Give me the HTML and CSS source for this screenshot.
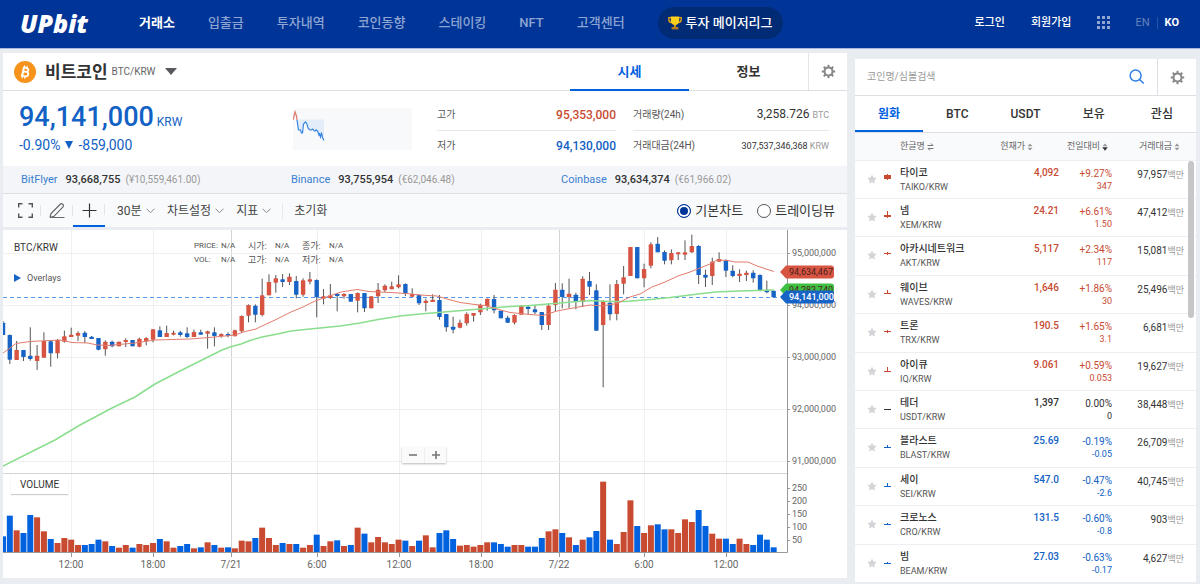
FILE: index.html
```html
<!DOCTYPE html>
<html lang="ko">
<head>
<meta charset="utf-8">
<meta name="viewport" content="width=device-width, initial-scale=1">
<title>UPbit</title>
<link rel="stylesheet" href="styles.css">
</head>
<body>
<header class="topbar">
  <a class="logo" href="#">UPbit</a>
  <nav class="nav">
    <a class="nav-link nav-link-on" href="#">거래소</a>
    <a class="nav-link" href="#">입출금</a>
    <a class="nav-link" href="#">투자내역</a>
    <a class="nav-link" href="#">코인동향</a>
    <a class="nav-link" href="#">스테이킹</a>
    <a class="nav-link" href="#">NFT</a>
    <a class="nav-link" href="#">고객센터</a>
    <a class="league" href="#">
      <svg width="14" height="14" viewBox="0 0 14 14" aria-hidden="true"><path d="M3.2 1.600H.8v2.200c0 1.600 1.200 2.800 2.900 2.900M10.800 1.600h2.400v2.200c0 1.600-1.200 2.800-2.900 2.900" fill="none" stroke="#e9a51c" stroke-width="1.300"/><path d="M2.800.6h8.400v4.200c0 2.600-1.700 4.200-4.200 4.200S2.800 7.400 2.800 4.800z" fill="#fdd01c"/><path d="M6.200 8.800h1.600v2.400H6.200z" fill="#eeb31c"/><path d="M3.600 11h6.800v2.400H3.600z" fill="#b9791c"/></svg>
      투자 메이저리그</a>
  </nav>
  <div class="account">
    <a class="account-link" href="#">로그인</a>
    <a class="account-link" href="#">회원가입</a>
    <button class="icon-btn apps" type="button" aria-label="서비스 더보기">
      <svg width="14" height="14" viewBox="0 0 14 14" fill="#8fa5d2"><path d="M0 0h3v3H0zM5 0h3v3H5zM10 0h3v3h-3zM0 5h3v3H0zM5 5h3v3H5zM10 5h3v3h-3zM0 10h3v3H0zM5 10h3v3H5zM10 10h3v3h-3z"/></svg>
    </button>
    <div class="langs"><a class="lang" href="#">EN</a><a class="lang lang-on" href="#">KO</a></div>
  </div>
</header>

<main class="page">
  <div class="market">
    <section class="summary">
      <div class="coin-head">
        <svg class="coin-logo" width="22" height="22" viewBox="0 0 22 22" aria-hidden="true"><circle cx="11" cy="11" r="11" fill="#f7931a"/><g transform="rotate(12 11 11)" fill="none" stroke="#fff"><path d="M8.400 6.800h3.300c2.900 0 2.900 3.900 0 3.900H8.900h3.300c3.300 0 3.300 4.500 0 4.500H7.600" stroke-width="1.800"/><path d="M9 6.500v9" stroke-width="2"/><path d="M9.400 4.500v2.500M12 4.500v2.500M9.400 15v2.500M12 15v2.500" stroke-width="1.300"/></g></svg>
        <h1 class="coin-name">비트코인</h1>
        <span class="coin-pair">BTC/KRW</span>
        <button class="icon-btn" type="button" aria-label="코인 선택"><svg width="12" height="7" viewBox="0 0 12 7"><path d="M0 0h12L6 7z" fill="#57595e"/></svg></button>
        <div class="coin-tabs">
          <button class="coin-tab coin-tab-on" type="button">시세</button>
          <button class="coin-tab" type="button">정보</button>
          <button class="icon-btn gear-cell" type="button" aria-label="설정"><svg class="gear" width="15" height="15" viewBox="0 0 15 15"></svg></button>
        </div>
      </div>

      <div class="quote">
        <div class="price-block">
          <p class="price"><strong class="price-value">94,141,000</strong><span class="price-unit">KRW</span></p>
          <p class="delta">-0.90% <span class="delta-arrow"></span> -859,000</p>
        </div>
        <svg class="spark" width="119" height="42" viewBox="0 0 119 42" aria-hidden="true"><path d="M0 0h119v42H0z" fill="#f8f9fb"/><path d="M4 11.500h27V32l-2-7-1 5-2-5-4-3-5-1-3-6-3 1-2 10-2-4-2 1z" fill="#e3edfa"/><path d="M0 12L2 4l1.500 4 .5 4" fill="none" stroke="#e07f70" stroke-width="1.300"/><path d="M4 12l1.500 10 2 0 1 3h1l1-9 2-2 1.500 2 1 4 2 2 1.500 0 1-1 2 2 1 0 .5-1 1.500 1 1.500 4 .5-1 1 3 1-4.500 1 5 1.500 3" fill="none" stroke="#3685e2" stroke-width="1.200"/></svg>
        <dl class="stats">
          <div class="stat"><dt>고가</dt><dd class="stat-num up">95,353,000</dd></div>
          <div class="stat"><dt>저가</dt><dd class="stat-num down">94,130,000</dd></div>
        </dl>
        <dl class="stats stats-wide">
          <div class="stat"><dt>거래량(24h)</dt><dd>3,258.726 <small>BTC</small></dd></div>
          <div class="stat"><dt>거래대금(24H)</dt><dd class="stat-small">307,537,346,368 <small>KRW</small></dd></div>
        </dl>
      </div>

      <div class="exchanges">
        <p class="exchange"><a href="#">BitFlyer</a><b>93,668,755</b><small>(¥10,559,461.00)</small></p>
        <p class="exchange"><a href="#">Binance</a><b>93,755,954</b><small>(€62,046.48)</small></p>
        <p class="exchange"><a href="#">Coinbase</a><b>93,634,374</b><small>(€61,966.02)</small></p>
      </div>

      <div class="tools">
        <button class="tool" type="button" aria-label="전체화면"><svg width="15" height="15" viewBox="0 0 15 15"><path d="M.700 4.500V.7h3.800M10.500.7h3.800v3.800M14.300 10.500v3.800h-3.800M4.500 14.300H.7v-3.800" fill="none" stroke="#555" stroke-width="1.400"/></svg></button>
        <button class="tool" type="button" aria-label="그리기"><svg width="16" height="16" viewBox="0 0 16 16" fill="none" stroke="#666" stroke-width="1.200"><path d="M1 14.500l1-4L11 1.500c1-1 2-1 2.800-.2s.8 1.800 0 2.800L5 13.300l-4 1.200h14.500"/></svg></button>
        <button class="tool tool-on" type="button" aria-label="십자선"><svg width="15" height="15" viewBox="0 0 15 15"><path d="M7.500.5v14M.5 7.500h14" stroke="#333" stroke-width="1.200"/></svg></button>
        <div class="menus">
          <label class="menu"><select class="menu-select" aria-label="시간 단위"><option>30분</option></select><svg class="chev" width="9" height="6" viewBox="0 0 9 6"><path d="M.5.7l4 4 4-4"/></svg></label>
          <button class="menu" type="button">차트설정<svg class="chev" width="9" height="6" viewBox="0 0 9 6"><path d="M.5.7l4 4 4-4"/></svg></button>
          <button class="menu" type="button">지표<svg class="chev" width="9" height="6" viewBox="0 0 9 6"><path d="M.5.7l4 4 4-4"/></svg></button>
        </div>
        <button class="menu reset" type="button">초기화</button>
        <div class="views">
          <label class="view"><input class="radio" type="radio" name="view" checked>기본차트</label>
          <label class="view"><input class="radio" type="radio" name="view">트레이딩뷰</label>
        </div>
      </div>
    </section>

    <section class="chart">
      <svg class="plot" id="plot" viewBox="0 0 844 348"></svg>
      <div class="legend">
        <p class="legend-pair">BTC/KRW</p>
        <button class="overlays" type="button"><span class="overlays-arrow"></span>Overlays</button>
      </div>
      <div class="readout">
        <span>PRICE:</span><span>N/A</span><span class="ko">시가:</span><span>N/A</span><span class="ko">종가:</span><span>N/A</span>
        <span>VOL:</span><span>N/A</span><span class="ko">고가:</span><span>N/A</span><span class="ko">저가:</span><span>N/A</span>
      </div>
      <div class="zoomer">
        <button class="zoom-btn" type="button" aria-label="축소"><svg width="10" height="10" viewBox="0 0 10 10"><path d="M1 5h8" stroke="#777" stroke-width="1.600"/></svg></button>
        <button class="zoom-btn" type="button" aria-label="확대"><svg width="10" height="10" viewBox="0 0 10 10"><path d="M1 5h8M5 1v8" stroke="#777" stroke-width="1.600"/></svg></button>
      </div>
      <p class="volume-tag">VOLUME</p>
    </section>
  </div>

  <aside class="coins">
    <div class="search">
      <input class="search-input" type="text" placeholder="코인명/심볼검색" aria-label="코인명/심볼검색">
      <button class="icon-btn search-btn" type="button" aria-label="검색"><svg width="16" height="16" viewBox="0 0 16 16" fill="none" stroke="#2f7fe0" stroke-width="1.500"><circle cx="6.600" cy="6.600" r="5.500"/><path d="M10.500 10.500l4.300 4"/></svg></button>
      <button class="icon-btn search-gear" type="button" aria-label="목록 설정"><svg class="gear" width="15" height="15" viewBox="0 0 15 15"></svg></button>
    </div>
    <div class="coin-filters">
      <button class="filter filter-on" type="button">원화</button>
      <button class="filter" type="button">BTC</button>
      <button class="filter" type="button">USDT</button>
      <button class="filter" type="button">보유</button>
      <button class="filter" type="button">관심</button>
    </div>
    <table class="list">
      <colgroup><col class="c-star"><col class="c-candle"><col><col class="c-price"><col class="c-rate"><col class="c-amount"></colgroup>
      <thead>
        <tr>
          <th></th><th></th>
          <th class="th-name">한글명<svg width="7" height="8" viewBox="0 0 7 8" fill="none" stroke="#777"><path d="M.5 2.500h5.500L4 .5M6.500 5.500H1l2 2"/></svg></th>
          <th class="th-price">현재가<svg class="sort" width="6" height="8" viewBox="0 0 6 8"><path d="M3 .5L5.500 3.200H.5zM3 7.500L.5 4.800h5z"/></svg></th>
          <th class="th-rate">전일대비<svg class="sort sort-on" width="6" height="8" viewBox="0 0 6 8"><path d="M3 .5L5.500 3.200H.5z"/><path class="sort-down" d="M3 7.800L.2 4.200h5.600z"/></svg></th>
          <th class="th-amount">거래대금<svg class="sort" width="6" height="8" viewBox="0 0 6 8"><path d="M3 .5L5.500 3.200H.5zM3 7.500L.5 4.800h5z"/></svg></th>
        </tr>
      </thead>
      <tbody id="rows"></tbody>
    </table>
    <span class="scroll-thumb"></span>
  </aside>
</main>
<script src="app.js"></script>
</body>
</html>
```

FILE: styles.css
```css
* { box-sizing: border-box; }

body {
  margin: 0;
  background: #e9ecf1;
  color: #333;
  font-family: Roboto, "Noto Sans CJK KR", sans-serif;
  font-size: 12px;
  line-height: 16px;
}

a { color: inherit; text-decoration: none; }
p, h1, dl, dd { margin: 0; }
svg { display: block; flex: none; }
.up { color: #c84a31; }
.down { color: #1261c4; }

button, input, select {
  margin: 0;
  padding: 0;
  border: 0;
  background: none;
  color: inherit;
  font: inherit;
}

.icon-btn { display: flex; align-items: center; justify-content: center; }
.gear { fill: none; stroke: #888; }

/* top bar */
.topbar {
  display: flex;
  align-items: center;
  height: 49px;
  padding: 0 21px 3px 20px;
  background: #003597;
  border-bottom: 1px solid #a9b8da;
}
.logo {
  width: 119px;
  color: #fff;
  font-family: "Open Sans", sans-serif;
  font-size: 25px;
  font-style: italic;
  font-weight: 800;
  line-height: 24px;
}
.nav { display: flex; align-items: center; gap: 33px; font-size: 13px; white-space: nowrap; }
.nav-link { color: #8ea4d2; font-weight: 500; }
.nav-link-on { color: #fff; font-weight: 700; }
.league {
  display: flex;
  align-items: center;
  gap: 4px;
  height: 32px;
  padding: 0 10px;
  border-radius: 16px;
  background: #022b75;
  color: #fff;
  font-weight: 500;
}
.account {
  display: flex;
  align-items: center;
  margin-left: auto;
  color: #fff;
  font-size: 11px;
  white-space: nowrap;
}
.account-link { margin-right: 26px; font-weight: 500; }
.apps { margin-right: 24px; }
.langs { display: flex; }
.lang { color: #6683bf; }
.lang-on { margin-left: 7px; padding-left: 7px; border-left: 1px solid #2853a7; color: #fff; font-weight: 700; line-height: 12px; align-self: center; }

/* page frame */
.page { display: flex; align-items: flex-start; gap: 8px; padding: 4px 4px 0 3px; }
.market { flex: 1; min-width: 0; }
.summary { background: #fff; }

/* coin heading */
.coin-head { display: flex; align-items: center; height: 38px; padding-left: 11px; border-bottom: 1px solid #dddfe4; }
.coin-logo { margin-right: 9px; }
.coin-name { font-size: 17px; line-height: 24px; }
.coin-pair { margin: 0 10px 0 4px; color: #666; font-size: 10px; }
.coin-tabs { display: flex; align-self: stretch; margin-left: auto; }
.coin-tab { width: 119px; height: 38px; font-size: 13px; font-weight: 700; }
.coin-tab-on { padding-top: 2px; border-bottom: 2px solid #0062df; color: #0062df; }
.gear-cell { width: 39px; border-left: 1px solid #e3e5ea; }

/* price and statistics */
.quote { display: flex; align-items: flex-start; height: 75px; padding: 8px 18px 0 16px; }
.price-block { flex: 1; padding-top: 4px; color: #1261c4; }
.price { display: flex; align-items: baseline; line-height: 28px; }
.price-value { font-size: 27px; font-weight: 500; }
.price-unit { margin-left: 3px; font-size: 12px; }
.delta { display: flex; align-items: center; gap: 5px; font-size: 14px; line-height: 18px; }
.delta-arrow { border: 4px solid transparent; border-top: 8px solid #1261c4; border-bottom: 0; }
.spark { margin: 9px 25px 0 0; }
.stats { width: 179px; font-size: 12px; }
.stats-wide { width: 196px; margin-left: 17px; }
.stat { display: flex; align-items: center; justify-content: space-between; height: 31px; white-space: nowrap; }
.stat + .stat { border-top: 1px solid #e7e8ec; }
.stat dt { font-size: 10px; color: #555; }
.stat-num { font-weight: 500; }
.stat-small { font-size: 9px; }
.stat small { color: #999; font-size: 9px; }

/* other exchanges */
.exchanges {
  display: grid;
  grid-template-columns: repeat(3, 1fr);
  height: 28px;
  padding: 0 16px 0 18px;
  background: #f4f5f8;
  border-bottom: 1px solid #dddfe4;
}
.exchange { display: flex; align-items: center; font-size: 11px; white-space: nowrap; }
.exchange a { color: #3a80d2; }
.exchange b { margin: 0 5px 0 8px; font-weight: 500; }
.exchange small { color: #999; font-size: 10px; }

/* chart toolbar */
.tools { display: flex; align-items: center; height: 33px; padding: 0 12px 0 6px; background: #f9fafc; color: #444; }
.tool {
  display: flex;
  align-items: center;
  justify-content: center;
  width: 32px;
  height: 33px;
  background: linear-gradient(#e3e5ea, #e3e5ea) right center / 1px 11px no-repeat;
}
.tool-on { border-bottom: 2px solid #0062df; padding-top: 2px; }
.menus { display: flex; gap: 12px; margin-left: 12px; }
.menu { display: flex; align-items: center; gap: 4px; }
.menu-select { appearance: none; }
.chev { fill: none; stroke: #888; }
.reset { margin-left: 11px; padding-left: 11px; border-left: 1px solid #e7e9ee; }
.views { display: flex; gap: 14px; margin-left: auto; font-size: 13px; color: #333; }
.view { display: flex; align-items: center; gap: 4px; white-space: nowrap; }
.radio {
  appearance: none;
  width: 14px;
  height: 14px;
  border: 1px solid #555;
  border-radius: 50%;
  background: #fff;
}
.radio:checked { border-color: #003597; background: #003597; box-shadow: inset 0 0 0 2px #fff; }

/* chart */
.chart { position: relative; margin-top: 3px; background: #fff; }
.plot { width: 100%; height: auto; }
.grid { stroke: #f0f0f1; }
.grid-day { stroke: #d4d4d6; }
.frame { stroke: #999; fill: none; }
.wick { stroke: #555; }
.rise { fill: #d75442; }
.fall { fill: #1763c6; }
.vol-rise { fill: #c84a31; }
.vol-fall { fill: #0062df; }
.now { fill: none; stroke: #5a9aee; stroke-dasharray: 4 3; }
.avg-fast { fill: none; stroke: #e27c6e; }
.avg-slow { fill: none; stroke: #8ade8d; stroke-width: 1.5; }
.axis { fill: #666; font-size: 9px; }
.axis-time { fill: #666; font-size: 10px; text-anchor: middle; }
.flag-red { fill: #d75442; }
.flag-green { fill: #3fc043; }
.flag-blue { fill: #1763c6; }
.flag-dark { fill: #4d211c; font-size: 9px; }
.flag-light { fill: #fff; font-size: 9px; font-weight: 500; }
.legend { position: absolute; left: 11px; top: 10px; }
.legend-pair { font-size: 10px; }
.overlays { display: flex; align-items: center; gap: 6px; margin-top: 14px; color: #555; font-size: 9px; }
.overlays-arrow { border: 4px solid transparent; border-left: 7px solid #1763c6; border-right: 0; }
.readout {
  position: absolute;
  left: 191px;
  top: 9px;
  display: grid;
  grid-template-columns: repeat(6, 27px);
  color: #555;
  font-size: 8px;
  line-height: 14px;
}
.ko { font-size: 9px; }
.zoomer {
  position: absolute;
  left: 399px;
  top: 217px;
  display: flex;
  background: #fafafa;
  box-shadow: 0 1px 2px #bbb;
}
.zoom-btn { display: flex; align-items: center; justify-content: center; width: 22px; height: 16px; }
.zoom-btn + .zoom-btn { border-left: 1px solid #eee; }
.volume-tag {
  position: absolute;
  left: 8px;
  top: 246px;
  padding: 1px 9px;
  background: #fff;
  box-shadow: 0 1px 1px #ccc;
  font-size: 10px;
}

/* coin list */
.coins { position: relative; width: 341px; margin-top: 6px; background: #fff; }
.search { display: flex; height: 37px; border-bottom: 1px solid #dddfe4; }
.search-input { flex: 1; min-width: 0; padding-left: 12px; font-size: 10px; outline: 0; }
.search-input::placeholder { color: #999; opacity: 1; }
.search-btn { width: 41px; }
.search-gear { width: 39px; border-left: 1px solid #dddfe4; }
.coin-filters { display: flex; border-bottom: 1px solid #dddfe4; }
.filter { flex: 1; height: 36px; font-weight: 500; }
.filter-on { padding-top: 2px; border-bottom: 2px solid #0062df; color: #0062df; font-weight: 700; }
.list { width: 100%; height: 449px; table-layout: fixed; border-collapse: collapse; }
.c-star { width: 28px; }
.c-candle { width: 17px; }
.c-price { width: 60px; }
.c-rate { width: 53px; }
.c-amount { width: 84px; }
th { height: 27px; padding: 0; background: #f9fafc; color: #666; font-size: 9px; font-weight: 400; text-align: right; white-space: nowrap; }
th svg { display: inline-block; margin-left: 2px; vertical-align: middle; }
.sort { fill: #999; }
.sort-down { fill: #333; }
.th-name { text-align: left; }
.th-price { padding-right: 26px; }
.th-rate { padding-right: 4px; }
.th-amount { padding-right: 16px; }
td { padding: 0; border-top: 1px solid #eeeff2; vertical-align: top; text-align: right; white-space: nowrap; font-size: 10px; line-height: 14px; }
.td-star { padding: 13px 0 0 12px; }
.td-candle { padding: 11px 0 0 1px; }
.td-name, .td-price, .td-rate { padding-top: 5px; }
.td-name { text-align: left; }
.td-name b { display: block; font-weight: 500; }
.td-name small { display: block; color: #555; font-size: 9px; }
.td-price { font-weight: 500; }
.td-rate { padding-top: 6px; }
.td-rate small { display: block; font-size: 9px; line-height: 10px; }
.td-amount { padding: 7px 12px 0 0; }
.td-amount small { color: #999; font-size: 9px; }
.scroll-thumb { position: absolute; right: 2px; top: 102px; width: 6px; height: 157px; border-radius: 3px; background: #c6c6c8; }
```

FILE: app.js
```js
// Gear icon shared by both settings buttons
const teeth = Array.from({ length: 8 }, (_, i) =>
  `<path d="M7.500 .8v2.400" stroke-width="2" transform="rotate(${i * 45} 7.500 7.500)"/>`).join('');
document.querySelectorAll('.gear').forEach(g => {
  g.innerHTML = `<circle cx="7.500" cy="7.500" r="4" stroke-width="2"/>${teeth}`;
});

// Coin list: name, pair, price, rate, change, amount, candle [high, open, close, low]
const coins = [
  ['타이코', 'TAIKO', '4,092', '+9.27%', '347', '97,957', [2, 3, 7, 8]],
  ['넴', 'XEM', '24.21', '+6.61%', '1.50', '47,412', [1, 5, 7, 8]],
  ['아카시네트워크', 'AKT', '5,117', '+2.34%', '117', '15,081', [4, 5, 6, 7]],
  ['웨이브', 'WAVES', '1,646', '+1.86%', '30', '25,496', [3, 6, 7, 7]],
  ['트론', 'TRX', '190.5', '+1.65%', '3.1', '6,681', [5, 6, 7, 8]],
  ['아이큐', 'IQ', '9.061', '+0.59%', '0.053', '19,627', [3, 7, 8, 8]],
  ['테더', 'USDT', '1,397', '0.00%', '0', '38,448', [7, 7, 8, 8]],
  ['블라스트', 'BLAST', '25.69', '-0.19%', '-0.05', '26,709', [5, 7, 8, 8]],
  ['세이', 'SEI', '547.0', '-0.47%', '-2.6', '40,745', [4, 7, 8, 8]],
  ['크로노스', 'CRO', '131.5', '-0.60%', '-0.8', '903', [6, 7, 8, 8]],
  ['빔', 'BEAM', '27.03', '-0.63%', '-0.17', '4,627', [6, 7, 8, 8]]
];
const star = '<svg width="10" height="10" viewBox="0 0 10 10"><path d="M5 .5l1.400 3 3.300.4-2.400 2.300.6 3.300L5 7.900 2.100 9.500l.6-3.300L.3 3.900l3.300-.4z" fill="#d3d4d7"/></svg>';
document.getElementById('rows').innerHTML = coins.map(([name, code, price, rate, diff, amount, [h, o, c, l]]) => {
  const tone = rate[0] === '+' ? 'up' : rate[0] === '-' ? 'down' : '';
  return `<tr>
    <td class="td-star"><button class="icon-btn" type="button" aria-label="${name} 관심">${star}</button></td>
    <td class="td-candle ${tone}"><svg width="8" height="14" viewBox="0 0 8 14" fill="currentColor"><path d="M0 ${o}h7v${c - o}H0zM3 ${h}h1v${l - h}H3z"/></svg></td>
    <td class="td-name"><b>${name}</b><small>${code}/KRW</small></td>
    <td class="td-price ${tone}">${price}</td>
    <td class="td-rate ${tone}">${rate}<small>${diff}</small></td>
    <td class="td-amount">${amount}<small>백만</small></td>
  </tr>`;
}).join('');

// Candles: direction, body top, body bottom, wick top, wick bottom (thirds of a unit)
const candles = `b293,330,288,330 b330,404,328,417 r375,405,348,405 b375,396,375,408 b392,402,307,407 r392,408,360,435
r348,398,322,398 b349,385,346,425 r345,385,342,400 r334,350,317,353 r329,336,308,336 r324,332,319,348 b323,336,318,354
b335,342,333,342 b339,374,339,376 r350,373,346,392 b350,364,347,367 r350,364,350,364 r345,351,340,366 b345,364,345,364
r341,365,338,367 r339,348,337,361 r313,344,312,352 b316,336,304,336 r324,336,302,336 r323,329,317,331 b322,330,317,335
b325,336,307,339 r321,336,314,336 b322,329,314,329 r319,326,317,371 b322,333,307,364 r327,333,325,338 b327,333,322,337
r316,334,314,334 r273,319,271,323 r240,272,238,292 b242,269,238,292 r211,270,161,274 r171,211,148,211 r160,173,150,203
b163,171,147,186 r155,171,145,180 b168,209,153,220 r166,209,160,215 r163,170,141,178 b165,217,163,277 r214,221,192,238
r211,219,177,222 b206,213,204,259 r207,214,204,221 b207,230,207,230 r204,227,202,262 b204,250,204,261 r214,250,214,250
r194,214,174,234 r182,196,178,201 r184,193,170,193 r178,187,151,190 b177,206,175,213 r207,215,190,216 b210,235,208,240
r227,234,221,259 r224,231,208,231 b225,276,210,284 b267,307,267,320 b305,314,275,325 r293,308,284,310 r267,295,262,302
r264,272,264,290 r240,262,236,270 r221,243,221,257 b222,256,210,265 b257,280,257,280 b278,293,272,294 r270,293,268,298
r242,269,242,269 b245,252,240,267 b253,262,240,267 b261,300,261,315 r242,300,235,315 r194,240,174,258 b194,216,175,250
r206,216,161,250 b209,231,203,253 r161,231,154,246 b168,185,141,210 b196,317,178,317 r229,300,226,487 b233,268,178,286
r177,267,165,286 r157,176,123,208 r66,153,66,153 b66,160,66,160 r132,160,116,187 r58,122,52,130 b56,82,36,82 b81,107,76,118
r84,106,73,118 r82,88,82,105 r82,89,46,105 r63,82,29,84 b63,150,60,177 b149,158,134,186 r110,153,98,180 r102,110,82,110
b107,137,103,156 b137,153,121,157 r146,153,133,171 r143,150,137,168 b143,160,136,173 b150,195,148,199 b195,202,167,205
b197,217,197,217`.split(/\s+/).map(c => [c[0], ...c.slice(1).split(',').map(v => (v - 15) / 3)]);

// Bar heights of the volume pane, in thirds of a unit
const volumes = [47, 109, 65, 57, 111, 104, 62, 39, 27, 42, 37, 21, 21, 24, 37, 32, 18, 13, 21, 13, 24, 21, 27, 39, 32, 13, 18, 24,
  11, 14, 29, 21, 13, 14, 11, 34, 32, 42, 73, 42, 21, 27, 24, 24, 13, 21, 52, 18, 32, 35, 18, 21, 73, 55, 29, 45, 29, 24, 37, 34,
  18, 34, 50, 14, 57, 65, 39, 19, 21, 16, 21, 29, 29, 24, 16, 21, 21, 16, 16, 42, 62, 68, 57, 44, 21, 37, 44, 63, 211, 37, 24, 60,
  155, 78, 57, 80, 83, 68, 68, 57, 98, 90, 126, 78, 55, 40, 40, 24, 40, 24, 21, 52, 37, 14];

const fast = '3,353 10,348 16,343.5 30,341.5 50,340.5 60,340 72,342.5 88,343 97,345 108,345.5 135,343 155,340 190,339 215,337 235,335 245,331.5 256,329 262,326 275,320 291,312 303,307 315,301 325,297.5 341,292 357,289.5 369,291.5 390,292.5 407,293.5 420,295 437,296 447,299 460,302.5 475,304.5 485,305.5 497,309 510,312.5 530,314.5 543,315.5 557,311 573,308 590,305 602,306 617,303.5 630,297 640,294 652,287 665,282 678,276 690,272 700,268 710,264 717,260 728,260.5 735,262 748,262 757,266 766,269 774,271.5';
const slow = '3,466 33,451 55,440 80,425 112,408 135,397 155,384 180,371 200,361 222,350 230,347 241,344 250,340.5 262,337 275,334.5 291,331 310,329 340,326 360,323 378,319.5 400,316 420,314 450,311.5 480,309 510,306.5 530,305.5 560,303 590,300.5 610,301.5 625,301.5 650,299.5 670,297.5 690,295 715,292 740,291 774,290';

const times = [[68, '12:00'], [150, '18:00'], [228, '7/21', 1], [314, '6:00'], [396, '12:00'], [478, '18:00'], [556, '7/22', 1], [641, '6:00'], [723, '12:00']];
const prices = [[23, '95,000,000'], [75, '94,000,000'], [127, '93,000,000'], [179, '92,000,000'], [231, '91,000,000']];
const amounts = [[258, 250], [271, 200], [284, 150], [297, 100], [310, 50]];
const at = i => (i * 6.82).toFixed(2);
const flag = (y, tone, ink, text) =>
  `<path class="flag-${tone}" d="M777 ${y}l6-6.500h45q3 0 3 3v7q0 3-3 3h-45z"/><text class="flag-${ink}" x="786" y="${y + 3}">${text}</text>`;

let art = '';
times.forEach(([x, t, day]) => {
  art += `<path class="${day ? 'grid-day' : 'grid'}" d="M${x + .5} 0V322"/><path class="frame" d="M${x + .5} 323v4"/><text class="axis-time" x="${x}" y="338">${t}</text>`;
});
prices.forEach(([y, t]) => {
  art += `<path class="grid" d="M0 ${y + .5}H784"/><path class="frame" d="M785 ${y + .5}h2"/><text class="axis" x="789" y="${y + 3}">${t}</text>`;
});
amounts.forEach(([y, t]) => {
  art += `<path class="frame" d="M785 ${y + .5}h2"/><text class="axis" x="789" y="${y + 3}">${t}</text>`;
});
art += '<path class="grid-day" d="M0 243.500H784"/><path class="frame" d="M784.500 0V322.500H0"/><path class="now" d="M0 67.500H777"/>';
candles.forEach(([dir, top, bottom, high, low], i) => {
  const tone = dir === 'r' ? 'rise' : 'fall';
  const h = volumes[i] / 3;
  art += `<path class="wick" d="M${at(i)} ${high}V${low}"/><rect class="${tone}" x="${at(i) - 2.2}" y="${top}" width="4.4" height="${bottom - top}" rx=".6"/>`;
  art += `<rect class="vol-${tone}" x="${at(i) - 3}" y="${322 - h}" width="6" height="${h}"/>`;
});
art += `<polyline class="avg-slow" transform="translate(-3 -230)" points="${slow}"/><polyline class="avg-fast" transform="translate(-3 -230)" points="${fast}"/>`;
art += flag(42, 'red', 'dark', '94,634,467') + flag(60, 'green', 'dark', '94,283,740') + flag(67, 'blue', 'light', '94,141,000');
document.getElementById('plot').innerHTML = art;
```
